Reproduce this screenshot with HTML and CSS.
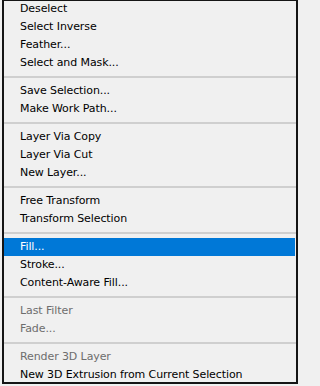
FILE: index.html
```html
<!DOCTYPE html>
<html>
<head>
<meta charset="utf-8">
<link rel="stylesheet" href="styles.css">
</head>
<body>
<div class="menu">
  <div class="item">Deselect</div>
  <div class="item">Select Inverse</div>
  <div class="item">Feather...</div>
  <div class="item">Select and Mask...</div>
  <div class="sep"></div>
  <div class="item">Save Selection...</div>
  <div class="item">Make Work Path...</div>
  <div class="sep"></div>
  <div class="item">Layer Via Copy</div>
  <div class="item">Layer Via Cut</div>
  <div class="item">New Layer...</div>
  <div class="sep"></div>
  <div class="item">Free Transform</div>
  <div class="item">Transform Selection</div>
  <div class="sep"></div>
  <div class="item active">Fill...</div>
  <div class="item">Stroke...</div>
  <div class="item">Content-Aware Fill...</div>
  <div class="sep"></div>
  <div class="item disabled">Last Filter</div>
  <div class="item disabled">Fade...</div>
  <div class="sep"></div>
  <div class="item disabled">Render 3D Layer</div>
  <div class="item">New 3D Extrusion from Current Selection</div>
</div>
</body>
</html>
```
FILE: styles.css
```css
html, body {
  margin: 0;
  padding: 0;
  background: #f0f0f0;
}
body {
  width: 300px;
  height: 386px;
  overflow: hidden;
}
.menu {
  margin-left: 2px;
  width: 292px;
  height: 382px;
  border-left: 2px solid #151515;
  border-right: 2px solid #151515;
  border-bottom: 2px solid #151515;
  box-shadow: inset 0 1px 0 #151515;
  background: #f0f0f0;
  font-family: "DejaVu Sans", sans-serif;
  font-size: 11px;
  letter-spacing: -0.1px;
  color: #000;
}
.item {
  height: 18px;
  line-height: 18px;
  padding-left: 16px;
  white-space: nowrap;
}
.item.active {
  background: #0078d7;
  color: #fff;
  margin-right: 1px;
}
.item.disabled {
  color: #6d6d6d;
}
.sep {
  height: 2px;
  margin: 4px 0 4px;
  background: #cfcfcf;
}
```
